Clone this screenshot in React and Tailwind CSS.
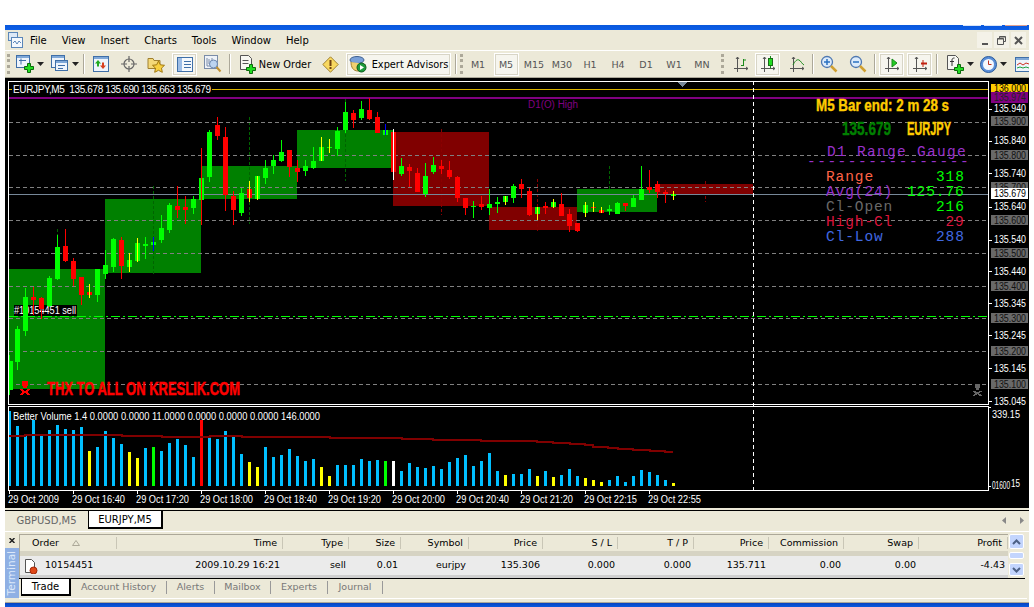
// MetaTrader 4 window: menu, toolbar, EURJPY chart and terminal

const ui = "[font-family:'DejaVu_Sans',sans-serif]";

// i, bodyTop, bodyBot, wickTop, wickBot, colour, wick colour
const G = "#00ff00";
const R = "#ff0000";
const Y = "#ffff00";
const candles = [
  [0, 361, 390, 355, 395, G], [1, 329, 362, 326, 370, G], [2, 297, 331, 288, 336, G], [3, 297, 300, 287, 315, R],
  [4, 298, 309, 297, 319, R], [5, 278, 306, 276, 307, G], [6, 247, 279, 235, 280, G], [7, 246, 261, 229, 262, R],
  [8, 261, 279, 258, 286, R], [9, 277, 295, 277, 305, R], [10, 292, 295, 284, 298, R, Y], [11, 269, 295, 269, 302, G],
  [12, 265, 274, 250, 279, G], [13, 239, 267, 238, 272, G], [14, 240, 266, 237, 279, R], [15, 260, 267, 253, 272, G, Y],
  [16, 243, 261, 238, 262, G, Y], [17, 244, 246, 237, 259, G], [18, 242, 245, 237, 251, G, "#0000ff"], [19, 228, 240, 215, 243, G],
  [20, 205, 230, 203, 233, G], [21, 206, 210, 186, 218, R], [22, 207, 210, 196, 224, R], [23, 199, 208, 196, 214, G],
  [24, 178, 200, 148, 225, G, R], [25, 132, 177, 130, 182, G], [26, 125, 136, 117, 140, R], [27, 137, 195, 127, 211, R],
  [28, 196, 210, 191, 225, R], [29, 193, 213, 188, 216, G], [30, 189, 198, 181, 202, R, Y], [31, 176, 199, 176, 200, G, Y],
  [32, 168, 178, 160, 184, G], [33, 160, 166, 155, 174, G], [34, 152, 161, 140, 162, G], [35, 150, 167, 150, 177, R],
  [36, 168, 172, 160, 182, R], [37, 166, 171, 160, 176, G], [38, 161, 168, 147, 169, G], [39, 147, 161, 137, 161, G, Y],
  [40, 147, 148, 139, 153, G, Y], [41, 131, 149, 127, 156, G], [42, 112, 130, 102, 133, G], [43, 113, 120, 110, 128, R],
  [44, 109, 118, 101, 120, G], [45, 110, 119, 98, 120, R], [46, 117, 133, 112, 133, R], [47, 130, 135, 124, 135, G, "#0000ff"],
  [48, 132, 172, 129, 180, R, "#ffffff"], [49, 166, 174, 158, 176, G], [50, 167, 171, 164, 187, R], [51, 173, 192, 168, 192, R],
  [52, 176, 194, 163, 197, G], [53, 165, 172, 157, 174, G], [54, 166, 169, 160, 174, R], [55, 170, 177, 161, 179, R],
  [56, 177, 198, 176, 202, R], [57, 198, 208, 198, 215, R], [58, 206, 207, 201, 218, G], [59, 204, 207, 196, 210, R],
  [60, 204, 208, 189, 215, G], [61, 202, 204, 197, 213, G], [62, 196, 202, 196, 205, G, Y], [63, 186, 198, 184, 203, G],
  [64, 184, 189, 179, 198, R], [65, 191, 215, 188, 216, R], [66, 207, 214, 207, 220, G, Y], [67, 206, 208, 202, 214, R],
  [68, 202, 207, 199, 208, G, Y], [69, 204, 216, 193, 216, R], [70, 214, 226, 209, 232, R], [71, 223, 231, 223, 232, R],
  [72, 205, 213, 202, 217, G, Y], [73, 207, 208, 202, 212, R, Y], [74, 210, 213, 207, 213, R, Y], [75, 209, 211, 205, 215, G],
  [76, 203, 214, 202, 214, G], [77, 203, 206, 203, 211, R], [78, 198, 207, 195, 207, G], [79, 189, 200, 166, 200, G],
  [80, 187, 190, 170, 193, R], [81, 184, 192, 181, 198, R], [82, 192, 194, 190, 203, R], [83, 194, 196, 191, 200, G, Y],
];

const dayBoxes = [
  [9, 105, 269, 389, "#008000"], [105, 201, 199, 273, "#008000"], [201, 297, 166, 199, "#008000"], [297, 393, 130, 168, "#008000"],
  [393, 489, 132, 206, "#800000"], [489, 577, 207, 230, "#800000"], [577, 657, 189, 212, "#008000"], [657, 753, 184, 195, "#800000"],
];

const dayRanges = [
  [57, 229, 270, "#006400"], [153, 186, 276, "#006400"], [249, 117, 224, "#006400"], [345, 99, 181, "#006400"],
  [441, 129, 215, "#8b0000"], [537, 179, 231, "#8b0000"], [609, 166, 190, "#006400"], [705, 181, 202, "#8b0000"],
];

const gridY = [122, 155, 187, 220, 253, 286, 318, 351, 384];

const axisLabels = [
  [108.5, "135.940"], [140.5, "135.840"], [173, "135.740"], [206.5, "135.640"], [239.5, "135.540"],
  [271, "135.440"], [303, "135.345"], [335, "135.245"], [368, "135.145"], [401, "135.045"],
];
const axisBoxes = [
  [121, "135.900"], [155, "135.800"], [187, "135.700"], [220, "135.600"], [253, "135.500"],
  [286, "135.400"], [318, "135.300"], [351, "135.200"], [384, "135.100"],
];

const B = "#00bfff";
const volumes = [
  [33, B], [78, B], [102, B], [60, B], [105, B], [90, B], [75, B], [87, B], [90, B], [81, B], [153, Y], [141, B],
  [93, B], [114, B], [132, B], [156, Y], [174, Y], [144, B], [141, G], [153, B], [129, B], [117, B], [135, B], [171, B],
  [60, R], [114, B], [117, B], [93, B], [111, B], [162, B], [186, Y], [201, Y], [141, B], [171, B], [165, B], [147, B],
  [168, B], [183, B], [177, B], [201, Y], [228, Y], [195, B], [195, B], [195, B], [177, B], [183, B], [180, B], [183, G],
  [183, "#ffffff"], [213, B], [189, B], [201, B], [204, B], [198, B], [207, B], [186, B], [174, B], [165, B], [198, B], [183, B],
  [159, B], [213, B], [225, Y], [222, B], [222, B], [207, B], [228, Y], [213, B], [231, Y], [225, B], [207, B], [228, B],
  [234, Y], [240, Y], [246, Y], [240, B], [228, B], [246, B], [228, B], [210, B], [216, B], [225, B], [240, B], [249, Y],
];

const volumeAvg = "M9 436H25V435H122V436H162V437H210V436H242V437H330V438H402V439H433V440H481V441H537V442H553V443H570V444H585V445H593V447H608V448H618V449H633V450H650V451H665V452H673";

const timeLabels = ["29 Oct 2009", "29 Oct 16:40", "29 Oct 17:20", "29 Oct 18:00", "29 Oct 18:40", "29 Oct 19:20", "29 Oct 20:00", "29 Oct 20:40", "29 Oct 21:20", "29 Oct 22:15", "29 Oct 22:55"];

const gauge = [
  [181, "Range", "318", "#ff6347", G, 936],
  [196, "Avg(24)", "125.76", "#9932cc", G, 907],
  [211, "Cl-Open", "216", "#696969", G, 936],
  [226, "High-Cl", "29", "#dc143c", "#dc143c", 945.5],
  [241, "Cl-Low", "288", "#4169e1", "#4169e1", 936],
];

const Skull = ({ x, y, c, s = 1 }) => (
  <g transform={`translate(${x} ${y}) scale(${s})`} fill={c}>
    <rect x="2" y="0" width="6" height="5" />
    <rect x="3" y="5" width="4" height="2" />
    <path d="M0 8h2l3 2 3-2h2v1L7 11l3 2v1H8l-3-2-3 2H0v-1l3-2-3-2z" />
  </g>
);

const Chart = () => (
  <svg viewBox="5 78 1024 430" shapeRendering="crispEdges" className="block w-[1024px] h-[430px] bg-black [font-family:'Liberation_Sans',sans-serif]">
    {/* price pane */}
    {dayBoxes.map(([x1, x2, y1, y2, c]) => (
      <rect key={x1} x={x1} y={y1} width={x2 - x1} height={y2 - y1} fill={c} />
    ))}
    {dayRanges.map(([x, y1, y2, c]) => (
      <line key={x} x1={x + 0.5} x2={x + 0.5} y1={y1} y2={y2} stroke={c} strokeDasharray="3 2" />
    ))}
    {gridY.map((y) => (
      <line key={y} x1="9" x2="988" y1={y + 0.5} y2={y + 0.5} stroke="#808080" strokeDasharray="4 3" />
    ))}
    <rect x="9" y="89" width="979" height="1" fill="#dcb400" />
    <rect x="9" y="97" width="979" height="2" fill="#800080" />
    <rect x="9" y="194" width="979" height="1" fill="#778899" />

    <rect x="14" y="305" width="63" height="11" fill="#000" />
    <text x="14" y="314" fontSize="10" fill="#fff" textLength="62" lengthAdjust="spacingAndGlyphs">#10154451 sell</text>

    {candles.map(([i, bt, bb, wt, wb, c, wc]) => {
      const x = 9 + 8 * i;
      return (
        <g key={i}>
          <rect x={x} y={wt} width="1" height={wb - wt} fill={c} />
          <rect x={Math.max(x - 2, 9)} y={bt} width={i === 0 ? 4 : 5} height={bb - bt} fill={c} />
          {wc && <rect x={x} y={wt} width="1" height={wb - wt} fill={wc} />}
        </g>
      );
    })}
    <line x1="9" x2="988" y1="316.5" y2="316.5" stroke="#00ff00" strokeDasharray="9 3 2 3" />
    <line x1="753.5" x2="753.5" y1="81" y2="490" stroke="#ffffff" strokeDasharray="4 3" />
    <path d="M677 82h11l-5.500 5z" fill="#778899" />

    <rect x="12" y="84" width="200" height="11" fill="#000" />
    <text x="13" y="93" fontSize="10" fill="#fff" textLength="198" lengthAdjust="spacing" xmlSpace="preserve">EURJPY,M5  135.678 135.690 135.663 135.679</text>
    <text x="528" y="108" fontSize="10" fill="#800080" textLength="50" lengthAdjust="spacingAndGlyphs">D1(O) High</text>

    <Skull x={20} y={381} c="#ff0000" />
    <text x="47" y="395" fontSize="18" fontWeight="700" fill="#ff0000" stroke="#ff0000" strokeWidth=".5" textLength="193" lengthAdjust="spacingAndGlyphs">THX TO ALL ON KRESLIK.COM</text>
    <Skull x={973} y={384} c="#666666" s={0.85} />

    {/* gauge block */}
    <text x="816" y="111" fontSize="17" fontWeight="700" fill="#ffcc00" stroke="#ffcc00" strokeWidth=".4" textLength="133" lengthAdjust="spacingAndGlyphs">M5 Bar end: 2 m 28 s</text>
    <text x="842" y="135" fontSize="18" fontWeight="700" fill="#008000" stroke="#008000" strokeWidth=".4" textLength="49" lengthAdjust="spacingAndGlyphs">135.679</text>
    <text x="907" y="135" fontSize="18" fontWeight="700" fill="#ffcc00" stroke="#ffcc00" strokeWidth=".4" textLength="44" lengthAdjust="spacingAndGlyphs">EURJPY</text>
    <g fontSize="14.500" letterSpacing=".9" className="[font-family:'Liberation_Mono',monospace]">
      <text x="827" y="156" fill="#9932cc" letterSpacing="1.3">D1 Range Gauge</text>
      <text x="807" y="166" fill="#9932cc" letterSpacing="1.5">----------------</text>
      {gauge.map(([y, label, value, c1, c2, vx]) => (
        <g key={label}>
          <text x="826" y={y} fill={c1}>{label}</text>
          <text x={vx} y={y} fill={c2}>{value}</text>
        </g>
      ))}
    </g>

    {/* price axis */}
    <rect x="8.500" y="81.500" width="980" height="323" fill="none" stroke="#fff" />
    {axisLabels.map(([y, t]) => (
      <g key={t}>
        <rect x="989" y={Math.round(y)} width="3" height="1" fill="#fff" />
        <text x="994" y={y + 3.5} fontSize="10" fill="#fff" textLength="32" lengthAdjust="spacingAndGlyphs">{t}</text>
      </g>
    ))}
    {axisBoxes.map(([y, t]) => (
      <g key={t}>
        <rect x="991" y={y - 5} width="37" height="10" fill="#696969" />
        <text x="994" y={y + 3.5} fontSize="10" fill="#111" textLength="32" lengthAdjust="spacingAndGlyphs">{t}</text>
      </g>
    ))}
    <rect x="991" y="84" width="37" height="8" fill="#ffcc00" />
    <text x="994" y="92" fontSize="10" fill="#000" textLength="32" lengthAdjust="spacingAndGlyphs">136.000</text>
    <rect x="991" y="92" width="37" height="11" fill="#800080" />
    <text x="994" y="101" fontSize="10" fill="#222" textLength="32" lengthAdjust="spacingAndGlyphs">135.974</text>
    <rect x="991" y="188" width="37" height="11" fill="#fff" />
    <text x="994" y="197" fontSize="10" fill="#000" textLength="32" lengthAdjust="spacingAndGlyphs">135.679</text>

    {/* volume pane */}
    <rect x="8.500" y="406.500" width="980" height="84" fill="none" stroke="#fff" />
    {volumes.map(([z, c], i) => (
      <rect key={i} x={8 + 8 * i + (i === 0 ? 1 : 0)} y={400 + Math.round(z / 3)} width={i === 0 ? 2 : 3} height={486 - 400 - Math.round(z / 3)} fill={c} />
    ))}
    <path d={volumeAvg} fill="none" stroke="#800000" strokeWidth="2" />
    <text x="13" y="420" fontSize="10" fill="#fff" textLength="307" lengthAdjust="spacingAndGlyphs">Better Volume 1.4 0.0000 0.0000 11.0000 0.0000 0.0000 0.0000 146.0000</text>
    <text x="992" y="418" fontSize="10" fill="#fff" textLength="28" lengthAdjust="spacingAndGlyphs">339.15</text>
    <rect x="989" y="407" width="2" height="1" fill="#fff" />
    <rect x="989" y="486" width="2" height="1" fill="#fff" />
    <text x="992" y="489" fontSize="10" fill="#fff" textLength="18" lengthAdjust="spacingAndGlyphs">01600</text>
    <text x="1011" y="487" fontSize="10" fill="#fff" textLength="9" lengthAdjust="spacingAndGlyphs">15</text>

    {/* time axis */}
    {timeLabels.map((t, i) => (
      <g key={t}>
        <rect x={9 + 64 * i} y="491" width="1" height="3" fill="#fff" />
        <text x={8 + 64 * i} y="503" fontSize="10" fill="#fff" textLength={i === 0 ? 51 : 53} lengthAdjust="spacingAndGlyphs">{t}</text>
      </g>
    ))}
  </svg>
);

const Plus = ({ x = 8, y = 8 }) => (
  <path transform={`translate(${x} ${y})`} d="M3.500 .5h3v3h3v3h-3v3h-3v-3h-3v-3h3z" fill="#22dd22" stroke="#0a6a0a" />
);

const Svg = ({ w = 18, h = 18, children }) => (
  <svg width={w} height={h} viewBox={`0 0 ${w} ${h}`} className="block shrink-0">{children}</svg>
);

const Caret = () => (
  <svg width="7" height="4" viewBox="0 0 7 4" className="block shrink-0"><path d="M0 0h7L3.500 4z" fill="#222" /></svg>
);

const Win = ({ x = 0.5, y = 0.5, w = 13, h = 12 }) => (
  <g>
    <rect x={x} y={y} width={w} height={h} fill="#eef4fc" stroke="#3f6fa8" />
    <rect x={x + 0.5} y={y + 0.5} width={w - 1} height="2" fill="#7fa8d8" />
  </g>
);

// chart-type icons share these crossed axes
const Axes = ({ children }) => (
  <Svg w={16} h={16}>
    <path d="M4.500 1v15M1 12.500h14" stroke="#555" fill="none" />
    <path d="M3 3l1.500-2L6 3M13 11l2 1.500-2 1.500" stroke="#555" fill="none" />
    {children}
  </Svg>
);

const Magnifier = ({ plus }) => (
  <Svg>
    <circle cx="7" cy="7" r="5.500" fill="#dcebfb" stroke="#4f78b0" strokeWidth="1.300" />
    <path d="M4 7h6" stroke="#2a70c0" strokeWidth="1.500" />
    {plus && <path d="M7 4v6" stroke="#2a70c0" strokeWidth="1.500" />}
    <path d="M11 11l5.500 5.500" stroke="#d0a030" strokeWidth="2.500" />
  </Svg>
);

const TopButton = ({ className = "", pressed, children }) => (
  <div className={`h-[23px] flex items-center justify-center gap-[3px] shrink-0 ${pressed ? "bg-[#f6f5ee] border border-white shadow-[inset_0_0_0_1px_#d8d5c6]" : ""} ${className}`}>
    {children}
  </div>
);

const Sep = ({ className = "" }) => <div className={`w-px h-[20px] bg-[#aca899] border-r border-white box-content shrink-0 ${className}`} />;
const Grip = ({ className = "" }) => <div className={`w-[3px] h-[20px] border-l-3 border-dotted border-[#aca899] shrink-0 ${className}`} />;

const frames = ["M1", "M5", "M15", "M30", "H1", "H4", "D1", "W1", "MN"];

const Toolbar = () => (
  <div className={`h-[28px] flex items-center border-t border-white border-b border-b-[#aca899] bg-[#ece9d8] text-[9.8px] text-black shrink-0 ${ui}`}>
    <Grip className="ml-[2px]" />
    <TopButton className="w-[29px] ml-[5px]">
      <Svg><Win /><path d="M3 5.500h7M5 3.500v6" stroke="#3f6fa8" fill="none" /><Plus /></Svg>
      <Caret />
    </TopButton>
    <TopButton className="w-[29px] ml-[6px]">
      <Svg><Win /><Win x={4.5} y={5.500} w={12} h={10} /><path d="M7 10.500h7M7 13.500h5" stroke="#3f6fa8" /></Svg>
      <Caret />
    </TopButton>
    <Sep className="ml-[4px]" />
    <TopButton className="w-[18px] ml-[7px]">
      <Svg w={16} h={16}><Win x={0.5} y={0.5} w={15} h={15} /><path d="M5 4l3 3.500H6v3H4v-3H2z" fill="#22aa22" /><path d="M10 13l-3-3.500h2v-3h2v3h2z" fill="#d84020" /></Svg>
    </TopButton>
    <TopButton className="w-[16px] ml-[11px]">
      <Svg w={16} h={16}><circle cx="8" cy="8" r="5" fill="none" stroke="#666" strokeWidth="1.200" /><path d="M8 0v6M8 10v6M0 8h6M10 8h6" stroke="#666" strokeWidth="1.200" /></Svg>
    </TopButton>
    <TopButton className="w-[18px] ml-[10px]">
      <Svg><path d="M1 3.500h5l1 2h6v8H1z" fill="#f4d878" stroke="#a08030" /><path d="M11.500 6l1.800 3.800 4.200.5-3 2.800.8 4.200-3.800-2-3.800 2 .8-4.200-3-2.800 4.200-.5z" fill="#f8d040" stroke="#a07810" /></Svg>
    </TopButton>
    <TopButton pressed className="w-[25px] ml-[7px]">
      <Svg w={16} h={15}><rect x=".5" y=".5" width="15" height="14" fill="#f4f8fd" stroke="#3f6fa8" /><rect x="1" y="1" width="4" height="13" fill="#9dbde6" /><path d="M7 4.500h7M7 7.500h7M7 10.500h7" stroke="#3f6fa8" /></Svg>
    </TopButton>
    <TopButton className="w-[18px] ml-[7px]">
      <Svg><rect x=".5" y=".5" width="13" height="13" fill="#eef2f8" stroke="#7a8ca8" /><path d="M3 3v8h8M5 4v5M8 3v4" stroke="#7a8ca8" fill="none" /><circle cx="9.500" cy="9" r="4" fill="#bcd4f0" stroke="#6c88b0" /><path d="M12.500 12l4 4.500" stroke="#c09030" strokeWidth="2" /></Svg>
    </TopButton>
    <Sep className="ml-[7px]" />
    <TopButton className="w-[72px] ml-[8px]">
      <Svg w={17} h={19}><path d="M1.500 .5h8l3 3v11h-11z" fill="#f7f7f2" stroke="#555" /><path d="M3.500 5.500h6M3.500 8.500h6" stroke="#555" /><Plus x={7} y={9} /></Svg>
      <span className="whitespace-nowrap pt-[2px]">New Order</span>
    </TopButton>
    <TopButton className="w-[17px] ml-[11px]">
      <Svg w={17} h={17}><path d="M8.500 .8l7.700 7.700-7.700 7.700L.8 8.500z" fill="#f8d860" stroke="#a08030" /><rect x="7.500" y="4" width="2" height="6" fill="#704010" /><rect x="7.500" y="11" width="2" height="2" fill="#704010" /></Svg>
    </TopButton>
    <TopButton pressed className="w-[105px] ml-[7px]">
      <Svg w={18} h={18}>
        <ellipse cx="8" cy="5" rx="7" ry="3.500" fill="#7aa0d8" stroke="#3f6090" />
        <path d="M2 7c0 5 2 9 7 9s7-3 7-7" fill="#f0d070" stroke="#a08030" />
        <circle cx="12.500" cy="12.500" r="4.500" fill="#1c9a3a" stroke="#0a5a1a" />
        <path d="M11 10l4 2.500-4 2.500z" fill="#fff" />
      </Svg>
      <span className="whitespace-nowrap ml-[2px] pt-[2px]">Expert Advisors</span>
    </TopButton>
    <Sep className="ml-[4px]" />
    <Grip className="ml-[3px]" />
    <div className="flex ml-[1px] pt-[2px] text-[9.5px] text-[#555]">
      {frames.map((f) => (
        <div key={f} className="w-[28px] flex justify-center">
          {f === "M5" ? (
            <div className="w-[25px] h-[23px] -mt-[2px] pt-[2px] flex items-center justify-center bg-[#f6f5ee] border border-white shadow-[inset_0_0_0_1px_#d8d5c6]">{f}</div>
          ) : (
            <div className="h-[21px] flex items-center">{f}</div>
          )}
        </div>
      ))}
    </div>
    <Grip className="ml-[5px]" />
    <TopButton className="w-[16px] ml-[9px]">
      <Axes><path d="M10.500 3v7M8 9.500h2.500M10.500 4H13" stroke="#1a8a1a" fill="none" /></Axes>
    </TopButton>
    <TopButton pressed className="w-[25px] ml-[6px]">
      <Axes><path d="M10.500 0v12" stroke="#1a8a1a" /><rect x="8.500" y="2.500" width="4" height="7" fill="#22dd22" stroke="#1a6a1a" /></Axes>
    </TopButton>
    <TopButton className="w-[16px] ml-[9px]">
      <Axes><path d="M4 9c2-4 4-6 6-5s3 4 5 5" stroke="#1a8a1a" fill="none" /></Axes>
    </TopButton>
    <Sep className="ml-[7px]" />
    <TopButton className="w-[18px] ml-[6px]"><Magnifier plus /></TopButton>
    <TopButton className="w-[18px] ml-[11px]"><Magnifier /></TopButton>
    <Sep className="ml-[7px]" />
    <TopButton pressed className="w-[25px] ml-[3px]">
      <Axes><path d="M8 3l5 4-5 4z" fill="#22cc22" stroke="#1a8a1a" /></Axes>
    </TopButton>
    <TopButton pressed className="w-[25px] ml-[3px]">
      <Axes><path d="M9 7.500h6" stroke="#c02010" strokeWidth="2" /><path d="M11 4v7" stroke="#c02010" /></Axes>
    </TopButton>
    <Sep className="ml-[4px]" />
    <TopButton className="w-[28px] ml-[8px]">
      <Svg w={18} h={19}><path d="M1.500 .5h8l3 3v11h-11z" fill="#f7f7f2" stroke="#555" /><path d="M6 11V5c0-1.500 1-2 2.500-2M4 6.500h4" stroke="#333" fill="none" /><Plus x={8} y={9} /></Svg>
      <Caret />
    </TopButton>
    <TopButton className="w-[27px] ml-[6px]">
      <Svg w={17} h={17}><circle cx="8.500" cy="8.500" r="8" fill="#5b8fd8" stroke="#2a5a9a" /><circle cx="8.500" cy="8.500" r="5.500" fill="#f4f8fd" /><path d="M8.500 4.500v4h3" stroke="#c03020" fill="none" /></Svg>
      <Caret />
    </TopButton>
    <div className="w-[14px] ml-[8px] overflow-hidden">
      <Svg w={16} h={15}><Win x={0.5} y={0.5} w={15} h={14} /><path d="M2 8l3-2 3 2 3-2 3 1" stroke="#d03020" fill="none" /><path d="M2 11l3-1 3 1 3-1 3 1" stroke="#20a040" fill="none" /></Svg>
    </div>
  </div>
);

const MenuBar = () => (
  <div className={`h-[20px] flex items-center bg-[#ece9d8] text-[10px] text-black shrink-0 ${ui}`}>
    <div className="ml-[3px] mr-[7px]">
      <Svg w={15} h={16}>
        <rect x=".5" y=".5" width="9" height="8" fill="#dce8f6" stroke="#5a86b8" />
        <rect x="3.500" y="5.500" width="11" height="10" fill="#f4f8fd" stroke="#5a86b8" />
        <path d="M5 11l2-2 2 3 2-3 2 2" stroke="#5a86b8" fill="none" />
      </Svg>
    </div>
    <div className="flex gap-[15px]">
      {["File", "View", "Insert", "Charts", "Tools", "Window", "Help"].map((m) => (
        <span key={m}>{m}</span>
      ))}
    </div>
    <div className="ml-auto mr-[3px] flex gap-[2px]">
      <div className="w-[15px] h-[16px] bg-[#f4f2e8] flex items-end justify-center pb-[3px]"><div className="w-[6px] h-[2px] bg-[#555]" /></div>
      <div className="w-[15px] h-[16px] bg-[#f4f2e8] flex items-center justify-center">
        <Svg w={9} h={9}><path d="M2.500 2.500v-2h6v5h-2M.5 2.500h6v6h-6z" fill="none" stroke="#555" /><path d="M.5 3h6M2.500 1h6" stroke="#555" /></Svg>
      </div>
      <div className="w-[15px] h-[16px] bg-[#f4f2e8] flex items-center justify-center">
        <Svg w={9} h={9}><path d="M1 1l7 7M8 1L1 8" stroke="#555" strokeWidth="2" /></Svg>
      </div>
    </div>
  </div>
);

const ChartTabs = () => (
  <div className={`h-[23px] pt-[2px] bg-[#ece9d8] text-[10px] shrink-0 ${ui}`}>
    <div className="h-[19px] border-t border-black flex items-start">
      <div className="w-[83px] h-[18px] flex items-center justify-center text-[#666]">GBPUSD,M5</div>
      <div className="w-[75px] h-[18px] flex items-center justify-center bg-white text-black border-l border-black border-r-2 border-b-2">EURJPY,M5</div>
      <div className="ml-auto mr-[5px] flex gap-[12px] h-[18px] items-center">
        <Svg w={5} h={7}><path d="M4 0v7L0 3.500z" fill="#888" /></Svg>
        <Svg w={5} h={7}><path d="M1 0v7l4-3.500z" fill="#888" /></Svg>
      </div>
    </div>
  </div>
);

const cols = "grid grid-cols-[97px_166px_66px_52px_68px_74px_75px_76px_75px_75px_75px_89px]";
const heads = ["Time", "Type", "Size", "Symbol", "Price", "S / L", "T / P", "Price", "Commission", "Swap", "Profit"];
const row = ["2009.10.29 16:21", "sell", "0.01", "eurjpy", "135.306", "0.000", "0.000", "135.711", "0.00", "0.00", "-4.43"];

const ScrollBtn = ({ down, className = "" }) => (
  <div className={`w-[15px] rounded-[2px] bg-[#c3d5fd] border border-white flex items-center justify-center ${className}`}>
    <Svg w={9} h={6}><path d={down ? "M1 1l3.500 3.500L8 1" : "M1 5l3.500-3.500L8 5"} stroke="#4d6185" strokeWidth="2" fill="none" /></Svg>
  </div>
);

const Terminal = () => (
  <div className={`h-[72px] flex border-t border-white border-b border-b-[#aca899] bg-[#ece9d8] text-[9.5px] shrink-0 ${ui}`}>
    <div className="w-[14px] flex flex-col shrink-0">
      <div className="h-[16px] flex items-center justify-center">
        <Svg w={6} h={5}><path d="M.5 0l5 5M5.500 0l-5 5" stroke="#222" strokeWidth="1.500" /></Svg>
      </div>
      <div className="h-[50px] bg-[#8fb0e4] flex items-center justify-center">
        <span className="[writing-mode:vertical-rl] rotate-180 text-[10.5px] text-[#dce8fa]">Terminal</span>
      </div>
    </div>
    <div className="flex-1 flex flex-col pt-[2px] pr-[2px]">
      <div className="flex h-[44px]">
        <div className="w-[989px] flex flex-col">
          <div className={`${cols} h-[17px] items-center border-t border-l border-[#aca899] bg-[#ece9d8] text-black`}>
            <div className="h-[12px] flex items-center pl-[12px] border-r border-[#c9c6b6] gap-[13px]">
              <span>Order</span>
              <Svg w={8} h={6}><path d="M4 .5l3.500 5h-7z" fill="none" stroke="#aca899" /></Svg>
            </div>
            {heads.map((h, i) => (
              <div key={i} className="h-[12px] flex items-center justify-end pr-[5px] border-r border-[#c9c6b6]">{h}</div>
            ))}
          </div>
          <div className="h-[5px] bg-[#d6d3c3] border-l border-[#aca899]" />
          <div className={`${cols} h-[19px] items-center bg-[#ebebeb] border-l border-[#aca899] text-black`}>
            <div className="flex items-center pl-[3px] gap-[7px]">
              <Svg w={15} h={16}>
                <path d="M2.500 1.500h6l3 3v10h-9z" fill="#fff" stroke="#555" />
                <circle cx="10.500" cy="12.500" r="3.500" fill="#e04818" stroke="#a02808" />
              </Svg>
              <span>10154451</span>
            </div>
            {row.map((v, i) => (
              <div key={i} className="text-right pr-[3px]">{v}</div>
            ))}
          </div>
          <div className="h-[3px] bg-[#cfcfcf] border-l border-[#aca899]" />
        </div>
        <div className="w-[18px] ml-[1px] flex flex-col">
          <ScrollBtn className="h-[15px]" />
          <div className="h-[7px] mt-[3px] w-[15px] bg-[#c3d5fd] border border-white rounded-[2px]" />
          <ScrollBtn down className="h-[13px] mt-[4px]" />
        </div>
      </div>
      <div className="h-[18px] border-t border-black flex items-start w-[1006px]">
        <div className="w-[50px] ml-[2px] h-[17px] bg-white text-black border-l border-black border-r-2 border-b-2 flex items-center justify-center text-[10px]">Trade</div>
        <div className="flex text-[#777] h-[17px] items-center">
          {[["Account History", "w-[96px]"], ["Alerts", "w-[48px]"], ["Mailbox", "w-[56px]"], ["Experts", "w-[57px]"], ["Journal", "w-[55px]"]].map(([t, w]) => (
            <div key={t} className={`${w} h-[13px] flex items-center justify-center border-r border-[#999]`}>{t}</div>
          ))}
        </div>
      </div>
      <div className="mt-[2px] border-t border-white" />
    </div>
  </div>
);

export default function App() {
  return (
    <div className="w-[1034px] h-[607px] bg-white overflow-hidden">
      <div className="ml-[5px] w-[1024px] mt-[25px]">
        <div className="h-[5px] bg-gradient-to-b from-[#0a58dc] to-[#0c5fe8] flex justify-end gap-[3px] pr-[2px]">
          <div className="w-[18px] h-px bg-[#d8e4f8]" />
          <div className="w-[18px] h-px bg-[#d8e4f8]" />
          <div className="w-[22px] h-px bg-[#e0a090]" />
        </div>
        <MenuBar />
        <Toolbar />
        <Chart />
        <ChartTabs />
        <Terminal />
        <div className="h-[4px] bg-gradient-to-b from-[#0842c0] to-[#0a5ae0]" />
      </div>
    </div>
  );
}
